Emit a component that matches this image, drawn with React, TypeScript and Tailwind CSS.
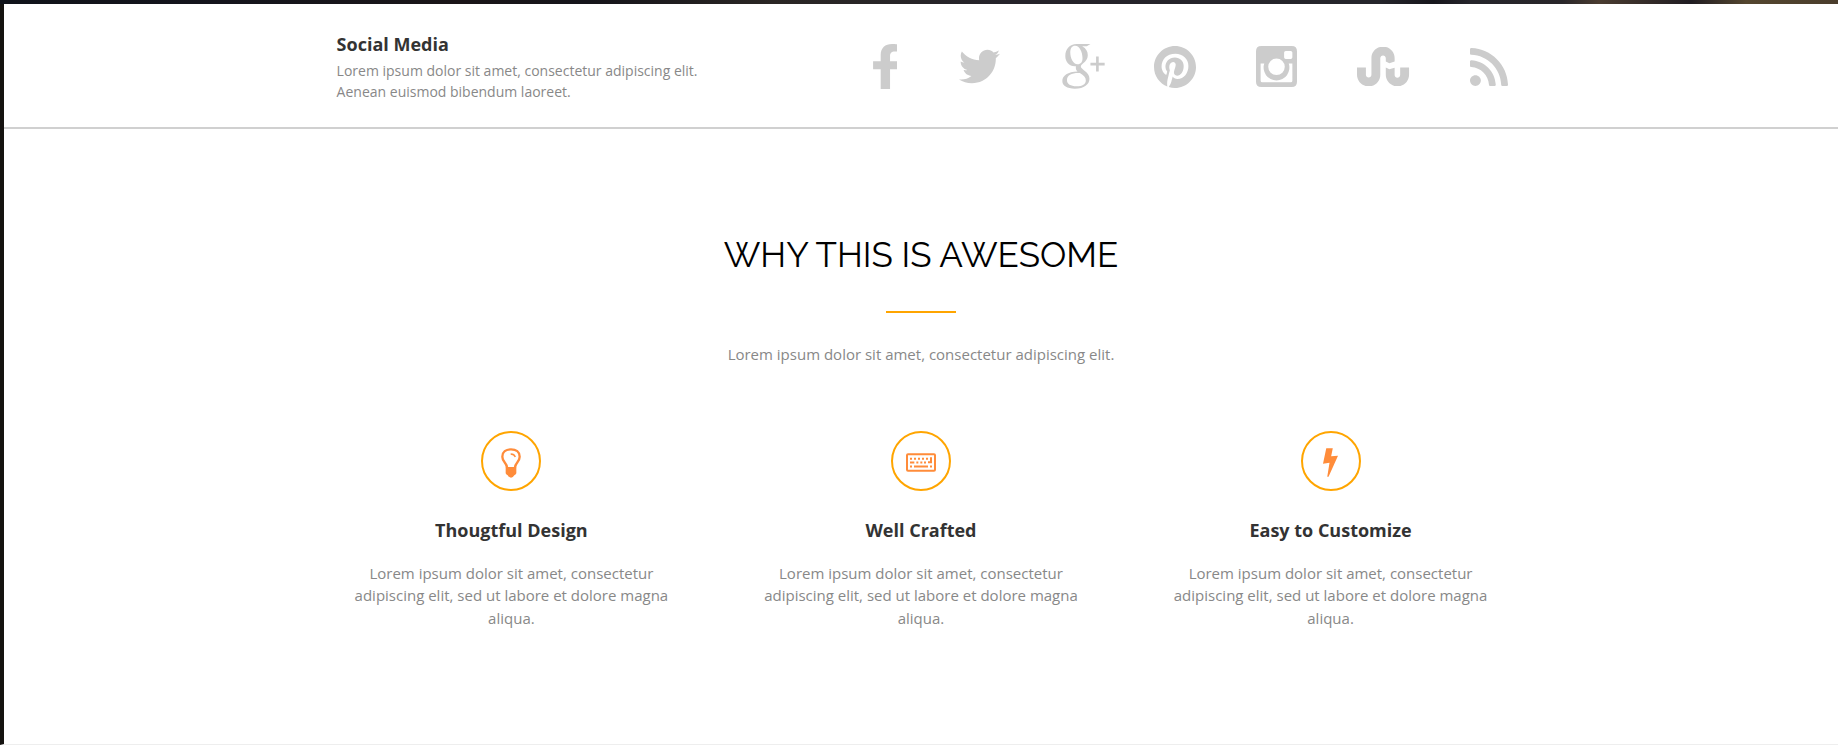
import type { ReactNode } from "react";
import { FaFacebookF, FaTwitter, FaPinterest, FaStumbleupon, FaRss } from "react-icons/fa";

function GooglePlusIcon() {
  return (
    <svg viewBox="640 38 130 136" className="h-[45px] w-[43px]" fill="currentColor" aria-hidden="true">
      <path
        fillRule="evenodd"
        d="M684 38 H726 L715 45 H701 C713 52 718 61 718 72 C718 83 712 90 704 96 C699 100 697 103 697 106 C697 110 701 113 707 118 C717 125 723 132 723 143 C723 160 707 173 679 173 C655 173 641 164 641 150 C641 133 658 122 687 121 C683 117 681 113 682 105 C663 107 650 93 650 74 C650 54 663 38 684 38 Z M680 43 C670 43 665 51 665 63 C665 82 674 99 687 99 C697 99 702 92 702 80 C702 62 693 43 680 43 Z M690 126 C668 126 655 134 655 147 C655 159 666 166 684 166 C702 166 712 159 712 148 C712 139 706 134 694 126 Z"
      />
      <path d="M743 76 h8 v19 h18 v8 h-18 v18 h-8 v-18 h-17 v-8 h17 Z" />
    </svg>
  );
}

function InstagramIcon() {
  return (
    <svg viewBox="0 0 124 124" className="size-[41px]" fill="currentColor" aria-hidden="true">
      <path
        fillRule="evenodd"
        d="M16 0 H108 Q124 0 124 16 V108 Q124 124 108 124 H16 Q0 124 0 108 V16 Q0 0 16 0 Z M90 15 Q85 15 85 20 V34 Q85 39 90 39 H105 Q110 39 110 34 V20 Q110 15 105 15 Z M14 53 V105 Q14 110 19 110 H105 Q110 110 110 105 V53 H99 A39 39 0 1 1 25 53 Z M62 38 A25 25 0 1 0 62 88 A25 25 0 1 0 62 38 Z"
      />
    </svg>
  );
}

function BulbIcon() {
  return (
    <svg viewBox="0 0 60 90" className="h-[30px] w-5" aria-hidden="true">
      <path
        d="M18 58 C17 44 4 42 4 26 C4 12 15 4 30 4 C45 4 56 12 56 26 C56 42 43 44 42 58"
        fill="none"
        stroke="currentColor"
        strokeWidth="7"
      />
      <path d="M14 57 H46 V76 Q44 80 40 82 Q36 89 30 89 Q24 89 20 82 Q16 80 14 76 Z" fill="currentColor" />
      <path d="M29 18 Q40 18 43 27" fill="none" stroke="currentColor" strokeWidth="4" />
    </svg>
  );
}

function KeyboardIcon() {
  return (
    <svg viewBox="0 0 90 56" className="h-[19px] w-[30px]" fill="currentColor" aria-hidden="true">
      <rect x="3" y="3" width="84" height="50" rx="3" fill="none" stroke="currentColor" strokeWidth="6" />
      <path d="M12 14h6v6h-6zM24 14h6v6h-6zM36 14h6v6h-6zM48 14h6v6h-6zM60 14h6v6h-6zM72 12h6v18h-12v-6h6zM12 25h13v6h-13zM31 25h6v6h-6zM43 25h6v6h-6zM54 25h6v6h-6zM12 37h6v6h-6zM24 37h42v6h-42zM72 37h6v6h-6z" />
    </svg>
  );
}

function BoltIcon() {
  return (
    <svg viewBox="0 0 46 88" className="h-[29px] w-[15px]" fill="currentColor" aria-hidden="true">
      <path d="M10 0 H30 L25 25 L46 23 L17 88 H13 L20 45 L0 48 Z" />
    </svg>
  );
}

const socials: { name: string; spacing: string; icon: ReactNode }[] = [
  {
    name: "Facebook",
    spacing: "",
    icon: <FaFacebookF viewBox="22 0 257 512" preserveAspectRatio="none" className="h-[45px] w-6" />,
  },
  { name: "Twitter", spacing: "mx-[13px]", icon: <FaTwitter className="size-[41px]" /> },
  { name: "Google Plus", spacing: "", icon: <GooglePlusIcon /> },
  { name: "Pinterest", spacing: "", icon: <FaPinterest viewBox="0 8 496 496" className="size-[42px]" /> },
  { name: "Instagram", spacing: "mx-[11px]", icon: <InstagramIcon /> },
  {
    name: "StumbleUpon",
    spacing: "",
    icon: <FaStumbleupon viewBox="0 69 512 374" className="h-[39px] w-[53px]" />,
  },
  { name: "RSS", spacing: "ml-[11px]", icon: <FaRss viewBox="0 32 448 448" className="size-[38px]" /> },
];

const features: { title: string; icon: ReactNode }[] = [
  { title: "Thougtful Design", icon: <BulbIcon /> },
  { title: "Well Crafted", icon: <KeyboardIcon /> },
  { title: "Easy to Customize", icon: <BoltIcon /> },
];

export default function App() {
  return (
    <div className="min-h-screen border-b border-l-4 border-b-[#eee] border-l-[#151310] bg-white font-['Open_Sans',sans-serif] text-[#888]">
      <div className="-ml-1 h-1 bg-[linear-gradient(90deg,#10131a,#14141c_12%,#1a1518_25%,#15141a_32%,#2a2624_42%,#25232a_55%,#25252b_75%,#17161c_78%,#25252b_80%,#29262a_85%,#4a3c30_87%,#201c22_92%,#54462f_95%,#4a3d2c)]" />

      <header className="border-b-2 border-[#d0d0d0]">
        <div className="mx-auto flex w-[67%] items-start justify-between pt-7 pr-[27px] pb-[21px] pl-[30px]">
          <div className="w-[380px] pb-1">
            <h2 className="text-lg leading-[25px] font-bold text-[#333]">Social Media</h2>
            <p className="mt-[3px] text-sm leading-[21px]">
              Lorem ipsum dolor sit amet, consectetur adipiscing elit. Aenean euismod bibendum laoreet.
            </p>
          </div>
          <nav aria-label="Social media" className="flex items-center gap-[49px] pt-3 text-[#ccc]">
            {socials.map((s) => (
              <a key={s.name} href="#" aria-label={s.name} className={s.spacing}>
                {s.icon}
              </a>
            ))}
          </nav>
        </div>
      </header>

      <main className="mx-auto w-[67%] pt-[100px] text-center text-[15px] leading-normal">
        <h1 className="font-['Raleway','Lato',sans-serif] text-[35px] leading-[52px] text-black">
          WHY THIS IS AWESOME
        </h1>
        <hr className="mx-auto mt-[30px] w-[70px] border-t-2 border-[#ffa500]" />
        <p className="mt-[30px]">Lorem ipsum dolor sit amet, consectetur adipiscing elit.</p>

        <div className="mt-[65px] grid grid-cols-3">
          {features.map((f) => (
            <section key={f.title} className="flex flex-col items-center px-[30px]">
              <div className="flex size-[60px] items-center justify-center rounded-full border-2 border-[#ffa500] pt-1 text-[#ff8c3a]">
                {f.icon}
              </div>
              <h3 className="mt-[26px] text-lg leading-[26px] font-bold text-[#333]">{f.title}</h3>
              <p className="mt-[19px]">
                Lorem ipsum dolor sit amet, consectetur adipiscing elit, sed ut labore et dolore magna aliqua.
              </p>
            </section>
          ))}
        </div>
      </main>
    </div>
  );
}
